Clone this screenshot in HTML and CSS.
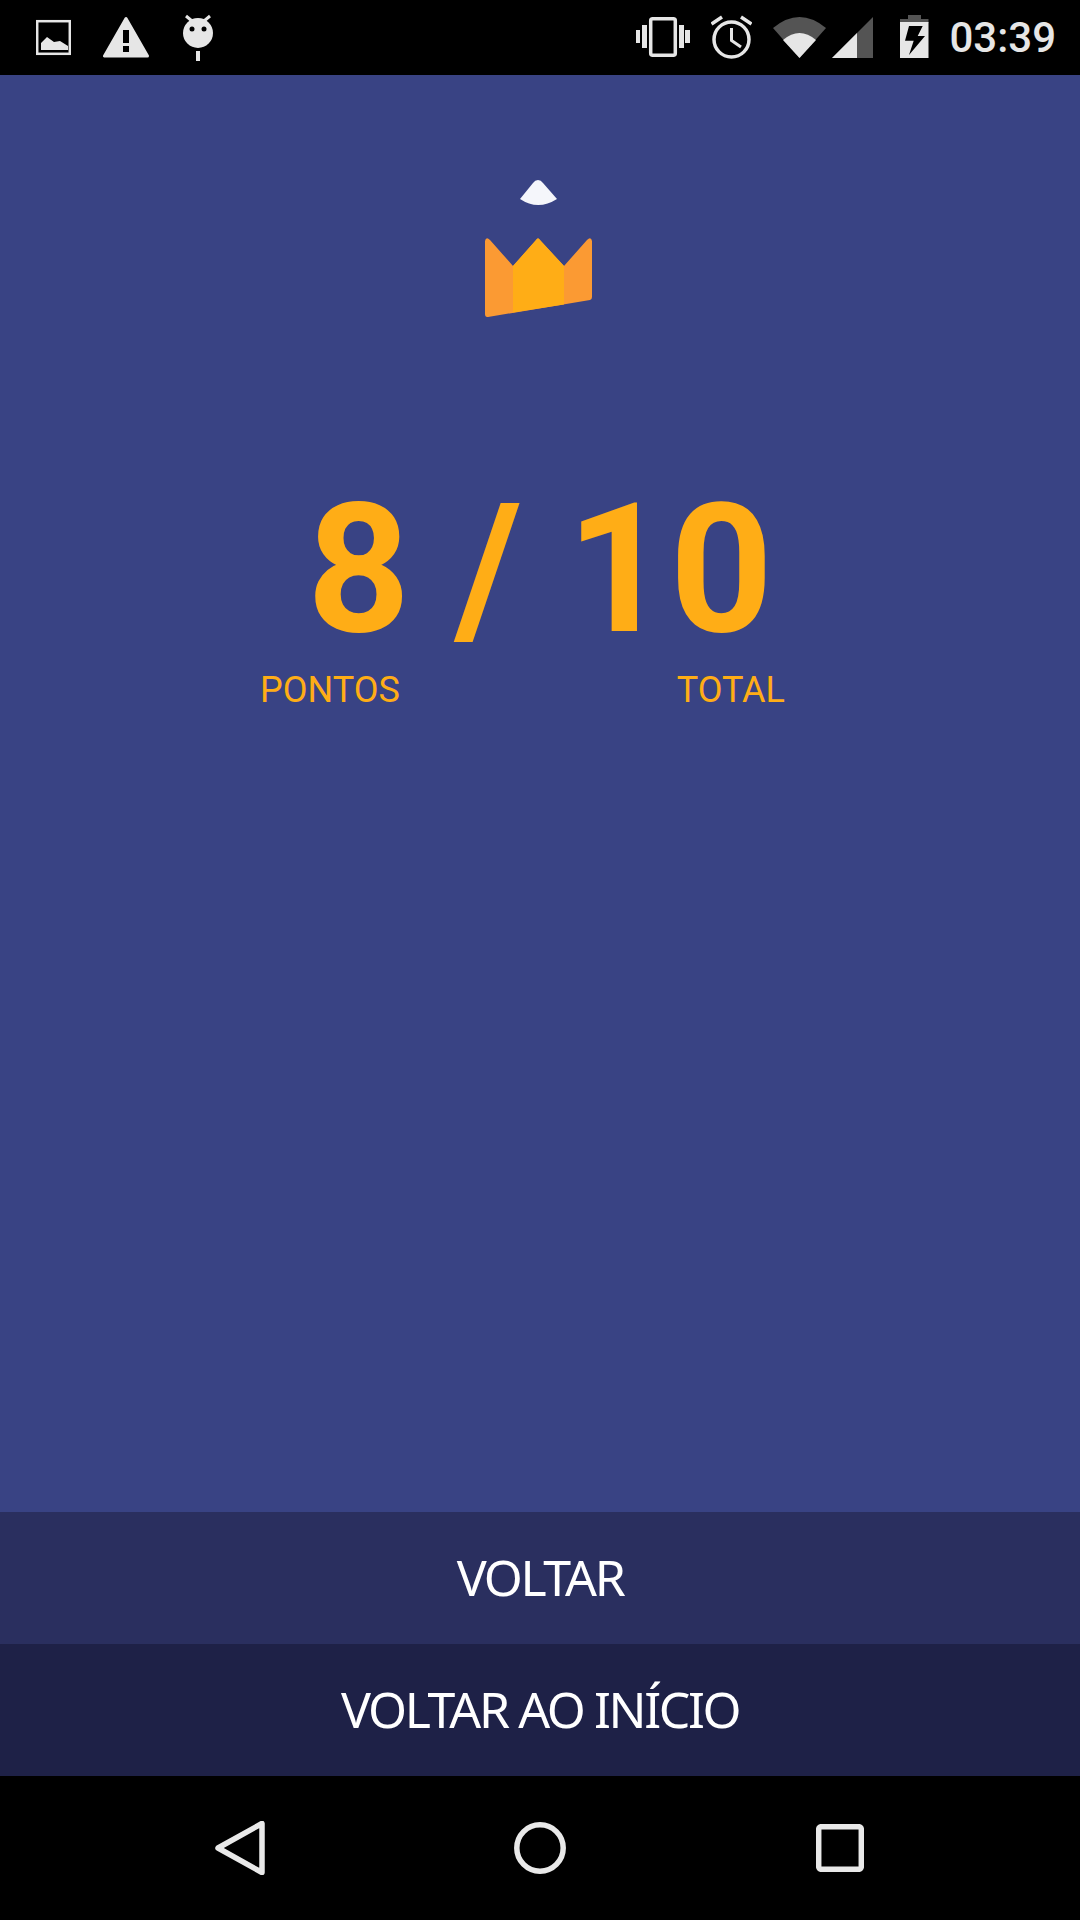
FILE: index.html
```html
<!DOCTYPE html>
<html lang="pt">
<head>
<meta charset="utf-8">
<title>Resultado</title>
<link rel="stylesheet" href="styles.css">
</head>
<body>
<div class="screen">
  <header class="status">
    <div class="status-left">
      <svg class="ic" width="35" height="75" viewBox="36 0 35 75"><rect class="line" x="37.2" y="21.2" width="32.6" height="32.6"/><path class="solid" d="M41 50V43L47 37L54 42L60 41L68 46V50Z"/></svg>
      <svg class="ic" width="46" height="75" viewBox="103 0 46 75"><path class="solid round" d="M126 18.500L104.500 56H147.500Z"/><rect class="cut" x="123" y="30" width="6" height="13"/><rect class="cut" x="123" y="46" width="6" height="6"/></svg>
      <svg class="ic" width="30" height="75" viewBox="183 0 30 75"><circle class="solid" cx="198" cy="33" r="15"/><path class="line thin" d="M186 16L192 21M210 16L204 21"/><circle class="cut" cx="192" cy="29" r="2.500"/><circle class="cut" cx="204" cy="29" r="2.500"/><rect class="solid" x="196" y="51" width="4" height="10"/></svg>
    </div>
    <div class="status-right">
      <svg class="ic" width="54" height="75" viewBox="636 0 54 75"><rect class="line heavy" x="650.700" y="18.700" width="24.600" height="36.600" rx="2"/><path class="solid" d="M636 30h4v13h-4zM642 25h5v23h-5zM679 25h5v23h-5zM685 30h5v13h-5z"/></svg>
      <svg class="ic" width="41" height="75" viewBox="711 0 41 75"><circle class="line heavy" cx="731.500" cy="39.500" r="17.500"/><path class="line thin" d="M731.500 28V40.500L741 47"/><path class="line heavy" d="M711.500 24L722 17M751.500 24L741 17"/></svg>
      <svg class="ic" width="53" height="75" viewBox="773 0 53 75"><path class="dim" d="M799.500 58L773 28Q799.500 6 826 28Z"/><path class="solid" d="M799.500 58L783 40Q799.500 26 816 40Z"/></svg>
      <svg class="ic" width="42" height="75" viewBox="832 0 42 75"><path class="dim" d="M832 58L873 17V58Z"/><path class="solid" d="M832 58L857 33V58Z"/></svg>
      <svg class="ic" width="29" height="75" viewBox="899 0 29 75"><path class="dim" d="M907 15H920V19H927.500V23H899V19H907Z"/><path class="solid" d="M899 22H927.500V58H899Z"/><path class="cut" d="M908 26H921.700L916.700 36H924L908 55L912.700 40.700H904Z"/></svg>
      <span class="clock">03:39</span>
    </div>
  </header>

  <main class="result">
    <svg class="crown" width="107" height="138" viewBox="485 180 107 138">
      <path class="tip" d="M538 180Q541 180 543 183L557 199Q538 211 520 199L533 183Q535 180 538 180Z"/>
      <path class="crown-side" d="M485 241Q486 236 490 240L513 266L538 238L564 266L587 240Q591 236 592 241V297Q592 299.500 590 300L488 317Q485 317.500 485 314Z"/>
      <path class="crown-mid" d="M513 266L535.500 240.500Q538 236.500 540.500 240.500L564 266V304.400L513 312.600Z"/>
    </svg>
    <div class="score">8 / 10</div>
    <div class="labels">
      <span>PONTOS</span>
      <span>TOTAL</span>
    </div>
  </main>

  <button class="action action-back">VOLTAR</button>
  <button class="action action-home">VOLTAR AO INÍCIO</button>

  <nav class="navbar">
    <svg class="nav-ic" width="50" height="54" viewBox="214 1821 50 54"><path d="M261 1823.500V1872.500L217 1848Z"/></svg>
    <svg class="nav-ic" width="52" height="52" viewBox="514 1822 52 52"><circle cx="540" cy="1848" r="23.200"/></svg>
    <svg class="nav-ic" width="48" height="48" viewBox="816 1824 48 48"><rect x="818.700" y="1826.700" width="42.600" height="42.600" rx="2.500"/></svg>
  </nav>
</div>
</body>
</html>
```
FILE: styles.css
```css
* { box-sizing: border-box; }
html, body { margin: 0; padding: 0; }
body { background: #000; font-family: Roboto, "Liberation Sans", sans-serif; }
.screen { width: 1080px; height: 1920px; display: flex; flex-direction: column; overflow: hidden; }

.status { height: 75px; flex: none; background: #000; display: flex; justify-content: space-between; align-items: center; padding: 0 24px 0 36px; }
.status-left, .status-right { display: flex; align-items: center; }
.status-left { gap: 32px; }
.status-left .ic:nth-child(3) { margin-left: 2px; }
.status-right { gap: 21px; }
.status-right .ic:nth-child(4) { margin-left: -15px; }
.status-right .ic:nth-child(5) { margin-left: 5px; }
.ic { display: block; flex: none; }
.solid { fill: #e6e6e6; stroke: none; }
.solid.round { stroke: #e6e6e6; stroke-width: 3; stroke-linejoin: round; }
.cut { fill: #000; stroke: none; }
.dim { fill: #545454; stroke: none; }
.line { fill: none; stroke: #e6e6e6; stroke-width: 2.500; }
.line.thin { stroke-width: 3; }
.line.heavy { stroke-width: 3.500; }
.clock { margin-left: -1px; font-size: 42px; font-weight: 500; line-height: 75px; color: #e6e6e6; }

.result { flex: 1; background: #394384; display: flex; flex-direction: column; }
.crown { display: block; margin: 105px 0 0 485px; }
.tip { fill: #f5f6fb; }
.crown-side { fill: #fb9a33; }
.crown-mid { fill: #ffad16; }
.score { margin-top: 162px; text-align: center; font-size: 180px; line-height: 180px; font-weight: 700; color: #ffad16; }
.labels { margin-top: 9px; padding: 0 295px 0 260px; display: flex; justify-content: space-between; font-size: 36px; line-height: 42px; color: #ffad16; }

.action { flex: none; display: block; width: 100%; height: 132px; border: 0; padding: 0 0 3px; color: #fff; font-family: "Noto Sans", "Open Sans", sans-serif; font-size: 50px; letter-spacing: -2.4px; text-align: center; }
.action-back { background: #2a2f5f; }
.action-home { background: #1e2147; }

.navbar { height: 144px; flex: none; background: #000; display: grid; grid-template-columns: repeat(3, 300px); justify-content: center; justify-items: center; align-items: center; }
.nav-ic { display: block; }
.nav-ic path, .nav-ic circle, .nav-ic rect { fill: none; stroke: #e9e9e9; stroke-width: 5.500; stroke-linejoin: round; }
```
